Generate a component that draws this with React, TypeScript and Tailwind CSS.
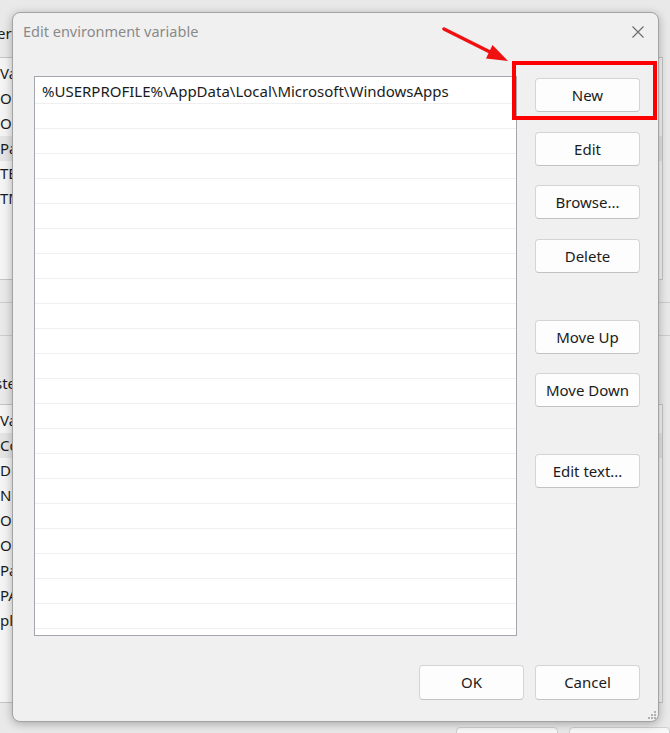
import React from "react";

const userRows = ["OneDrive", "OneDriveConsumer", "Path", "TEMP", "TMP"];
const systemRows = [
  "ComSpec",
  "DriverData",
  "NUMBER_OF_PROCESSORS",
  "OneDriveConsumer",
  "OS",
  "Path",
  "PATHEXT",
  "platformcode",
];

function ParentList({ rows, selected, height }: { rows: string[]; selected: number; height: string }) {
  return (
    <div className={`w-[663px] border-y border-r border-[#c4c4c4] bg-[#f4f4f4] pt-[3px] ${height}`}>
      <div className="h-[25px] flex items-center text-[15px] text-[#1b1b1b]">Variable</div>
      {rows.map((r, i) => (
        <div
          key={r + i}
          className={`h-[25px] flex items-center text-[15px] text-[#1b1b1b] ${i === selected ? "bg-[#e4e4e4]" : ""}`}
        >
          {r}
        </div>
      ))}
    </div>
  );
}

function Btn({ label, className = "" }: { label: string; className?: string }) {
  return (
    <button className={`w-[105px] h-[34px] shrink-0 bg-[#fdfdfd] border border-[#d4d4d4] border-b-[#c2c2c2] rounded-[4px] text-[15px] text-[#1b1b1b] flex items-center justify-center ${className}`}>
      {label}
    </button>
  );
}

export default function App() {
  const listRows = Array.from({ length: 22 });
  return (
    <div className="relative w-[670px] h-[733px] overflow-hidden bg-[#e9e9e9] font-['Noto_Sans',sans-serif]">
      {/* parent window behind the dialog */}
      <div className="flex flex-col">
        <div className="h-[57px] pt-[22px] text-[15px] leading-[22px] text-[#1b1b1b] ml-[-3px]">er variables</div>
        <ParentList rows={userRows} selected={2} height="h-[223px]" />
        <div className="h-[124px] flex flex-col">
          <div className="h-[22px]" />
          <div className="h-[34px] border-y border-[#cdcdcd]" />
          <div className="h-[34px]" />
          <div className="pt-[2px] text-[15px] leading-[22px] text-[#1b1b1b] ml-[-5px]">stem variables</div>
        </div>
        <ParentList rows={systemRows} selected={0} height="h-[299px]" />
        <div className="flex gap-[11px] pl-[456px] pt-[24px]">
          <div className="w-[105px] h-[34px] bg-[#f7f7f7] border border-[#cfcfcf] rounded-[4px]" />
          <div className="w-[105px] h-[34px] bg-[#f7f7f7] border border-[#cfcfcf] rounded-[4px]" />
        </div>
      </div>

      {/* dialog */}
      <div className="absolute left-[12px] top-[12px] w-[647px] h-[710px] flex flex-col bg-[#f0f0f0] border border-[#a3a3a3] rounded-[8px] shadow-[0_2px_10px_rgba(0,0,0,0.28)]">
        <div className="h-[38px] flex items-center justify-between pl-[10px] pr-[13px]">
          <span className="text-[14.5px] text-[#8a8a8a]">Edit environment variable</span>
          <svg width="14" height="14" viewBox="0 0 14 14">
            <path d="M1.5 1.5 L12.5 12.5 M12.5 1.5 L1.5 12.5" stroke="#6b6b6b" strokeWidth="1.1" fill="none" />
          </svg>
        </div>
        <div className="flex pl-[21px] pt-[25px]">
          <div className="w-[483px] h-[560px] bg-white border border-[#a5a6ad] overflow-hidden pt-[2px]">
            <div className="h-[25px] flex items-center pl-[7px] border-b border-[#efefef] text-[15px] text-[#1b1b1b]">
              %USERPROFILE%\AppData\Local\Microsoft\WindowsApps
            </div>
            {listRows.map((_, i) => (
              <div key={i} className="h-[25px] border-b border-[#efefef]" />
            ))}
          </div>
          <div className="flex flex-col ml-[18px] pt-[2px]">
            <Btn label="New" />
            <Btn label="Edit" className="mt-[20px]" />
            <Btn label="Browse..." className="mt-[19px]" />
            <Btn label="Delete" className="mt-[20px]" />
            <Btn label="Move Up" className="mt-[47px]" />
            <Btn label="Move Down" className="mt-[19px]" />
            <Btn label="Edit text..." className="mt-[47px]" />
          </div>
        </div>
        <div className="flex justify-end gap-[11px] pr-[18px] pt-[29px]">
          <Btn label="OK" className="h-[35px]" />
          <Btn label="Cancel" className="h-[35px]" />
        </div>
        <svg className="absolute right-[2px] bottom-[2px]" width="9" height="9" viewBox="0 0 9 9">
          <rect x="7" y="1" width="2" height="2" fill="#b0b0b0" />
          <rect x="4" y="4" width="2" height="2" fill="#b0b0b0" />
          <rect x="7" y="4" width="2" height="2" fill="#b0b0b0" />
          <rect x="1" y="7" width="2" height="2" fill="#b0b0b0" />
          <rect x="4" y="7" width="2" height="2" fill="#b0b0b0" />
          <rect x="7" y="7" width="2" height="2" fill="#b0b0b0" />
        </svg>
      </div>

      {/* annotation: red highlight box and arrow */}
      <div className="absolute left-[512px] top-[61px] w-[145px] h-[59px] border-[4px] border-[#ff0000]" />
      <svg className="absolute left-0 top-0" width="670" height="733" viewBox="0 0 670 733">
        <line x1="444" y1="29" x2="492" y2="53" stroke="#f01010" strokeWidth="3.5" strokeLinecap="round" />
        <polygon points="508,61 486,58.5 492.5,45" fill="#f01010" />
      </svg>
    </div>
  );
}
